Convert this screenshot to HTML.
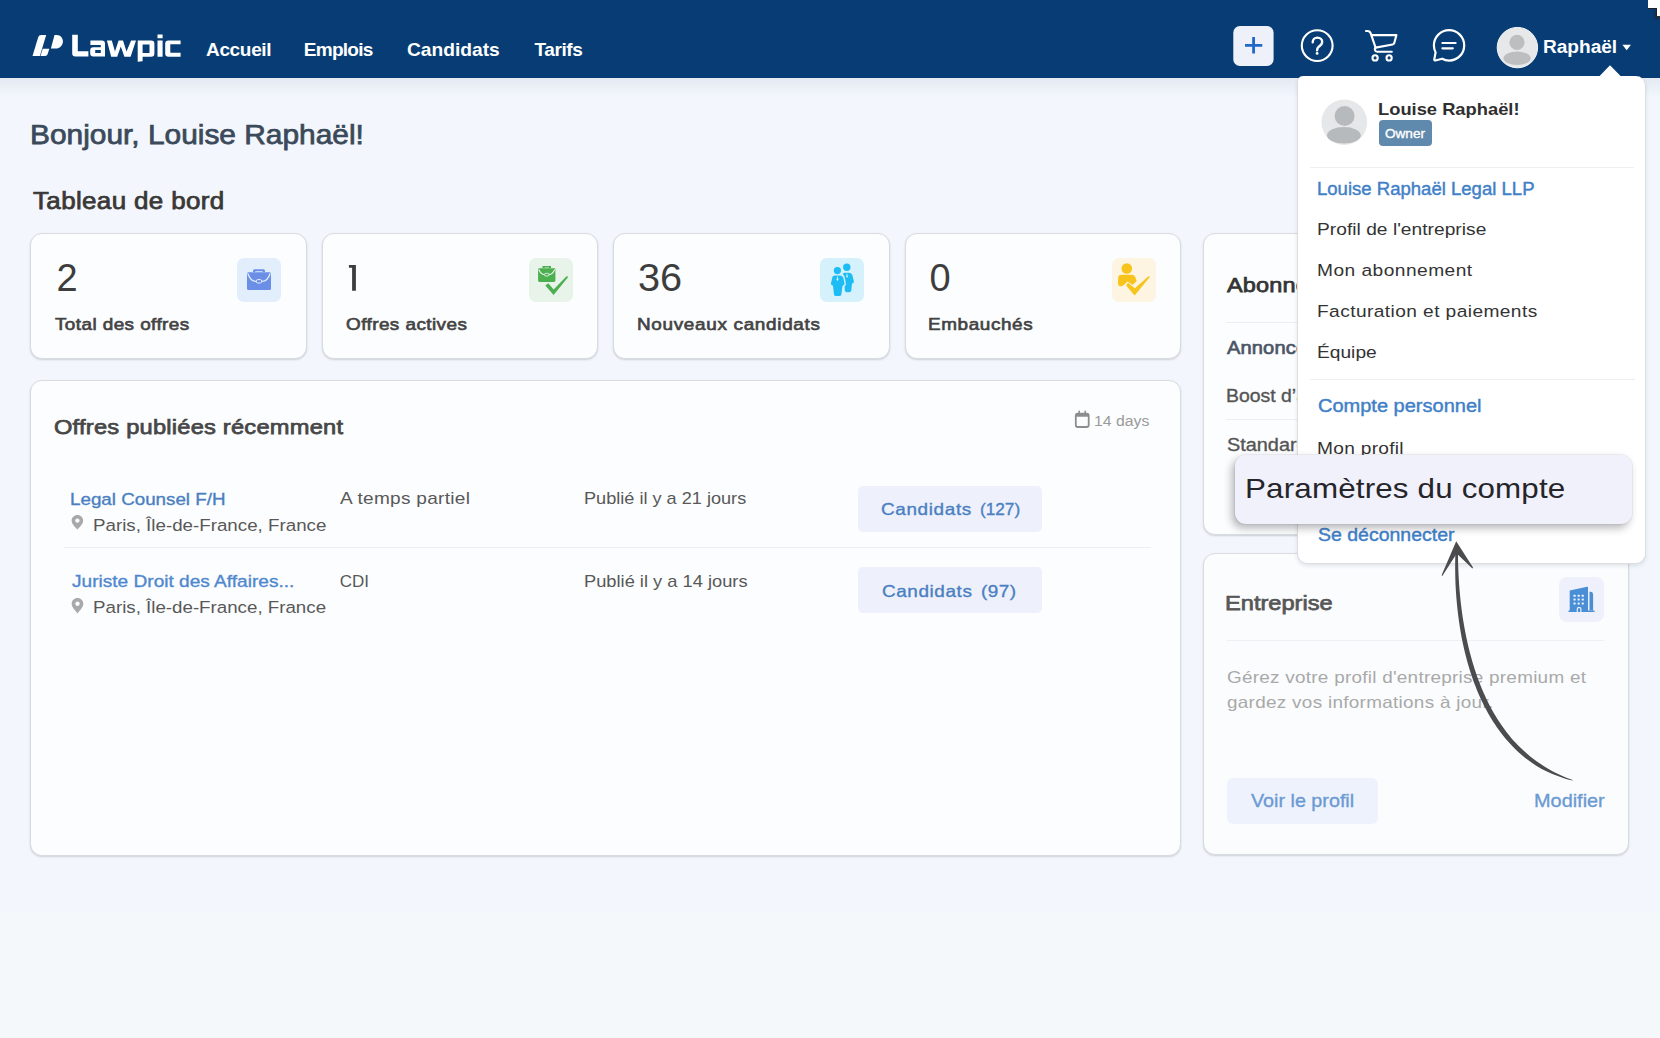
<!DOCTYPE html>
<html lang="fr">
<head>
<meta charset="utf-8">
<title>Lawpic - Tableau de bord</title>
<style>
*{margin:0;padding:0;box-sizing:border-box;}
html,body{width:1660px;height:1038px;overflow:hidden;}
body{position:relative;background:#f3f7fd;font-family:"Liberation Sans",sans-serif;}
.abs{position:absolute;}
.t{position:absolute;line-height:0;white-space:nowrap;font-family:"Liberation Sans",sans-serif;}
.card{position:absolute;background:#fcfdfe;border:1px solid #d8dbe0;border-radius:12px;box-shadow:0 1px 2px rgba(50,55,70,0.2);}
.hr{position:absolute;height:1px;background:#eceef1;}
.ibox{position:absolute;width:44px;height:44px;border-radius:7px;}
svg{position:absolute;left:0;top:0;overflow:visible;}
</style>
</head>
<body>
<!-- page background gradient near bottom -->
<div class="abs" style="left:0;top:78px;width:1660px;height:20px;background:linear-gradient(rgba(40,60,100,0.07),rgba(40,60,100,0));"></div>

<div class="abs" style="left:0;top:912px;width:1660px;height:126px;background:#f4f8fb;"></div>
<!-- NAVBAR -->
<div class="abs" style="left:0;top:0;width:1660px;height:78px;background:#073d74;"></div>
<svg width="1660" height="80" viewBox="0 0 1660 80">
  <g fill="#ffffff">
    <path d="M32.5,56.1 L38.2,37.3 Q38.9,35 41.3,35 L46.2,35 L39.9,56.1 Z"/>
    <path d="M42.7,48.8 L49.3,48.8 L47.6,54.3 Q47.1,56.1 45,56.1 L40.5,56.1 Z"/>
    <path d="M54.5,35 L56.8,35 C60.4,35 62.9,37.9 62.9,41.5 C62.9,45.6 59.6,48.6 55.6,48.6 L50.9,48.6 Z"/>
    <path d="M72.2,34.8 L77.8,34.8 L77.8,51.2 L88.4,51.2 L88.4,56.5 L75.4,56.5 Q72.2,56.5 72.2,53.3 Z"/>
    <path fill-rule="evenodd" d="M90.4,40.6 L101.8,40.6 Q105,40.6 105,43.8 L105,56.5 L93.4,56.5 Q90.2,56.5 90.2,53.3 L90.2,50.4 Q90.2,47.2 93.4,47.2 L100.8,47.2 L100.8,45.1 L90.4,45.1 Z M95.2,49.9 L100.8,49.9 L100.8,52.9 L95.2,52.9 Z"/>
    <path d="M106.9,40.4 L111.8,40.4 L115,51.6 L118.6,40.4 L123,40.4 L126.5,51.6 L131.1,40.4 L136,40.4 L130.6,56.7 L124.4,56.7 L120.8,46.6 L117.2,56.7 L111.2,56.7 Z"/>
    <path fill-rule="evenodd" d="M137.7,40.4 L151.1,40.4 Q154.4,40.4 154.4,43.7 L154.4,53.4 Q154.4,56.7 151.1,56.7 L142.6,56.7 L142.6,61.2 L137.7,61.8 Z M142.6,44.5 L149.5,44.5 L149.5,52.9 L142.6,52.9 Z"/>
    <path d="M157.5,34.6 L162.6,34.6 L162.6,38.3 L157.5,38.3 Z M157.5,40.4 L162.6,40.4 L162.6,56.7 L157.5,56.7 Z"/>
    <path d="M168.5,40.4 L180.6,40.4 L180.6,44.3 L170.3,44.3 L170.3,52.8 L180.6,52.8 L180.6,56.7 L168.5,56.7 Q165.2,56.7 165.2,53.4 L165.2,43.7 Q165.2,40.4 168.5,40.4 Z"/>
  </g>
  <!-- plus button -->
  <rect x="1233.3" y="26" width="40.3" height="40" rx="6.5" fill="#eef0fa"/>
  <path d="M1245,45.3 L1262.3,45.3 M1253.6,37 L1253.6,53.5" stroke="#2169c6" stroke-width="2.8" fill="none"/>
  <!-- help -->
  <circle cx="1317.2" cy="45.6" r="15.4" stroke="#fff" stroke-width="2.1" fill="none"/>
  <path d="M1312.7,42.2 C1312.7,39.4 1314.8,37.6 1317.4,37.6 C1320.2,37.6 1322.2,39.6 1322.2,42 C1322.2,44.6 1320.2,45.6 1318.7,46.8 C1317.5,47.8 1317.1,48.6 1317.1,50.2" stroke="#fff" stroke-width="2.4" fill="none" stroke-linecap="round"/>
  <circle cx="1317.1" cy="53.4" r="1.4" fill="#fff"/>
  <!-- cart -->
  <g stroke="#fff" stroke-width="2.1" fill="none" stroke-linecap="round" stroke-linejoin="round">
    <path d="M1366,31 L1367.6,31 C1369.2,31 1370.2,31.9 1370.7,33.4 L1375.6,47.6"/>
    <path d="M1371.8,35.1 L1396.4,35.1 L1394.2,43.2 C1393.9,44 1393.4,44.4 1392.6,44.5 L1375.6,47.6"/>
    <path d="M1375.6,47.6 C1374.2,48.7 1374.6,51.7 1377.2,51.7 L1391.8,51.7"/>
    <circle cx="1375.1" cy="57.9" r="2.6"/>
    <circle cx="1389.1" cy="57.9" r="2.6"/>
  </g>
  <!-- chat -->
  <g stroke="#fff" stroke-width="2.2" fill="none" stroke-linecap="round" stroke-linejoin="round">
    <path d="M1442.2,58.7 C1444.3,60 1446.6,60.6 1449.1,60.6 C1457.4,60.6 1464.2,53.8 1464.2,45.4 C1464.2,37 1457.4,30.2 1449.1,30.2 C1440.7,30.2 1433.9,37 1433.9,45.4 C1433.9,47.9 1434.5,50.3 1435.6,52.4 L1434.3,59.4 C1434.2,60.1 1434.7,60.6 1435.4,60.5 Z"/>
    <path d="M1442.4,43 L1455.6,43 M1442.4,48.3 L1452.8,48.3"/>
  </g>
  <!-- avatar -->
  <defs><clipPath id="avc"><circle cx="1517.2" cy="47.8" r="20"/></clipPath>
  <clipPath id="avc2"><circle cx="1344.3" cy="122.2" r="22.6"/></clipPath></defs>
  <circle cx="1517.4" cy="47.6" r="20.2" fill="#e7e8ea" stroke="#f6f7f8" stroke-width="1"/>
  <g fill="#bdbec0">
    <circle cx="1517" cy="42.4" r="7.6"/>
    <ellipse cx="1517.1" cy="58.2" rx="13.6" ry="6.7"/>
  </g>
  <path d="M1542,50" />
  <path d="M1622.4,44.7 L1631,44.7 L1626.7,50.3 Z" fill="#fff"/>
</svg>
<div class="t" id="t0" style="left:206.00px;top:49.91px;font-size:19.05px;font-weight:700;color:#ffffff;letter-spacing:-0.352px;">Accueil</div>
<div class="t" id="t1" style="left:303.80px;top:49.91px;font-size:19.05px;font-weight:700;color:#ffffff;letter-spacing:-0.740px;">Emplois</div>
<div class="t" id="t2" style="left:407.30px;top:49.91px;font-size:19.05px;font-weight:700;color:#ffffff;letter-spacing:0.000px;transform:scaleX(1.0086);transform-origin:0 0;">Candidats</div>
<div class="t" id="t3" style="left:534.50px;top:49.91px;font-size:19.05px;font-weight:700;color:#ffffff;letter-spacing:-0.425px;">Tarifs</div>
<div class="t" id="t4" style="left:1543.42px;top:47.01px;font-size:17.72px;font-weight:700;color:#ffffff;letter-spacing:0.000px;transform:scaleX(1.0769);transform-origin:0 0;">Raphaël</div>

<!-- MAIN -->
<div class="card" style="left:30px;top:232.5px;width:276.5px;height:126px;"></div>
<div class="card" style="left:321.5px;top:232.5px;width:276.5px;height:126px;"></div>
<div class="card" style="left:613px;top:232.5px;width:276.5px;height:126px;"></div>
<div class="card" style="left:904.5px;top:232.5px;width:276.5px;height:126px;"></div>
<div class="ibox" style="left:237px;top:258px;background:#e2eefc;"></div>
<div class="ibox" style="left:528.7px;top:258px;background:#e8f4ea;"></div>
<div class="ibox" style="left:820px;top:258px;background:#d5f1fc;"></div>
<div class="ibox" style="left:1112px;top:258px;background:#fef4e2;"></div>
<svg width="1660" height="1038" viewBox="0 0 1660 1038">
  <path d="M348.9,265.1 L355.9,265.1 L355.9,290.8 L352.1,290.8 L352.1,267.7 L348.9,267.7 Z" fill="#3d3d3d"/>
  <!-- briefcase blue -->
  <g fill="#6b8ee6">
    <path d="M254.5,269.3 L263.5,269.3 Q265,269.3 265,270.8 L265,272 L262.6,272 L262.6,271.3 L255.4,271.3 L255.4,272 L253,272 L253,270.8 Q253,269.3 254.5,269.3 Z"/>
    <path d="M248.5,272.3 L269.5,272.3 Q271,272.3 271,273.8 L271,288.5 Q271,290 269.5,290 L248.5,290 Q247,290 247,288.5 L247,273.8 Q247,272.3 248.5,272.3 Z"/>
  </g>
  <path d="M247.8,273.5 Q250.5,281.5 256,281.3 L262,281.3 Q267.5,281.5 270.2,273.5" stroke="#e2eefc" stroke-width="1.3" fill="none"/>
  <rect x="256.3" y="279.6" width="5.4" height="3.4" rx="1.4" fill="#6b8ee6" stroke="#e2eefc" stroke-width="1"/>
  <!-- briefcase green + check -->
  <g fill="#4caf50">
    <path d="M542.5,265.9 L551,265.9 L551,268 L548.8,268 L548.8,267.4 L544.7,267.4 L544.7,268 L542.5,268 Z"/>
    <path d="M539.5,268.3 L554,268.3 Q555.4,268.3 555.4,269.7 L555.4,280.5 Q555.4,281.9 554,281.9 L539.5,281.9 Q538.1,281.9 538.1,280.5 L538.1,269.7 Q538.1,268.3 539.5,268.3 Z"/>
    <path d="M545.3,285.5 L548.3,283.3 L553.6,289.4 L566.3,276.6 Q567.9,275.9 568,277.2 L553.6,295 Z"/>
  </g>
  <path d="M538.8,269.5 Q540.8,274.6 544.5,274.6 L549,274.6 Q552.7,274.6 554.7,269.5" stroke="#e8f4ea" stroke-width="1.1" fill="none"/>
  <rect x="544.6" y="273.3" width="4.3" height="2.7" rx="1.2" fill="#4caf50" stroke="#e8f4ea" stroke-width="0.9"/>
  <!-- people cyan -->
  <g fill="#1ebcf4">
    <circle cx="837.4" cy="270.6" r="3.6"/>
    <circle cx="846.8" cy="267.2" r="3.7"/>
    <path d="M832.6,276.6 Q833.5,275.6 835,275.5 L840,275.5 Q842,275.6 843.3,277.5 L844.5,283.5 Q844.5,285.5 842.5,285.8 L841.4,294.5 Q841,296.1 839.2,296.1 L836,296.1 Q834.2,296.1 834,294.5 L833,285.8 Q830.9,285.5 830.9,283.5 Z"/>
    <path d="M842.7,273.8 Q843.6,272.8 845,272.7 L849,272.7 Q851.1,272.8 852.2,274.8 L853.9,281.2 Q854,283.4 852,283.5 L851.3,290.6 Q851,292.2 849.3,292.2 L846.7,292.2 Q845.1,292.2 844.8,290.6 L844.6,286.5 Q846.4,285 845.8,282.8 L844.5,276.6 Z"/>
  </g>
  <path d="M837.5,275.6 L838.4,279.5 L837.5,281.2 L836.6,279.5 Z" fill="#d5f1fc"/>
  <path d="M847,272.8 L847.8,276.4 L847,278 L846.2,276.4 Z" fill="#d5f1fc"/>
  <!-- person check yellow -->
  <g fill="#f6c41c">
    <circle cx="1126.8" cy="268.5" r="5.3"/>
    <path d="M1119,275.6 Q1120,274.8 1122,274.8 L1131.5,274.8 Q1134.6,274.8 1135.4,277.5 L1136.7,281 L1132.5,285 L1127.6,281.5 L1123.6,285.3 Q1121.5,286.7 1119.7,286.2 Q1117.9,285.4 1118,283 L1118.2,278.4 Q1118.3,276.4 1119,275.6 Z"/>
    <path d="M1126.2,285.6 L1128,282.8 L1134.8,288.2 L1148.2,276.5 Q1149.7,275.8 1149.8,277 L1134.6,295.6 Z"/>
  </g>
</svg>

<div class="card" style="left:30px;top:379.5px;width:1151px;height:476px;"></div>
<div class="hr" style="left:63.5px;top:547px;width:1087.5px;"></div>
<div class="abs" style="left:857.7px;top:486.2px;width:184.3px;height:46.2px;background:#eef1fb;border-radius:5px;"></div>
<div class="abs" style="left:857.7px;top:567.1px;width:184.3px;height:45.5px;background:#eef1fb;border-radius:5px;"></div>
<svg width="1660" height="1038" viewBox="0 0 1660 1038">
  <!-- calendar -->
  <g stroke="#8d8d8d" fill="none" stroke-width="1.8" stroke-linejoin="round">
    <rect x="1075.8" y="413.6" width="12.9" height="13.4" rx="2"/>
    <rect x="1075.8" y="413.2" width="12.9" height="3.6" rx="1.2" fill="#8d8d8d" stroke="none"/>
    <path d="M1079.2,411.2 L1079.2,414 M1085.2,411.2 L1085.2,414" stroke-linecap="round" stroke-width="1.6"/>
  </g>
  <!-- pins -->
  <g fill="#a9a9a9">
    <path d="M77.4,514.9 C74.1,514.9 71.6,517.4 71.6,520.6 C71.6,524 75,527.1 77.4,529.4 C79.8,527.1 83.2,524 83.2,520.6 C83.2,517.4 80.7,514.9 77.4,514.9 Z M77.4,518.4 C78.6,518.4 79.6,519.4 79.6,520.6 C79.6,521.8 78.6,522.8 77.4,522.8 C76.2,522.8 75.2,521.8 75.2,520.6 C75.2,519.4 76.2,518.4 77.4,518.4 Z" fill-rule="evenodd"/>
    <path d="M77.5,598 C74.2,598 71.7,600.5 71.7,603.7 C71.7,607.1 75.1,610.2 77.5,613.5 C79.9,610.2 83.3,607.1 83.3,603.7 C83.3,600.5 80.8,598 77.5,598 Z M77.5,601.5 C78.7,601.5 79.7,602.5 79.7,603.7 C79.7,604.9 78.7,605.9 77.5,605.9 C76.3,605.9 75.3,604.9 75.3,603.7 C75.3,602.5 76.3,601.5 77.5,601.5 Z" fill-rule="evenodd"/>
  </g>
</svg>
<div class="t" id="t5" style="left:30.21px;top:135.01px;font-size:27.30px;font-weight:400;-webkit-text-stroke:0.75px currentColor;color:#3b4a5a;letter-spacing:0.000px;transform:scaleX(1.0944);transform-origin:0 0;">Bonjour, Louise Raphaël!</div>
<div class="t" id="t6" style="left:33.00px;top:201.41px;font-size:23.18px;font-weight:400;-webkit-text-stroke:0.75px currentColor;color:#3a3836;letter-spacing:0.322px;transform:scaleX(1.1200);transform-origin:0 0;">Tableau de bord</div>
<div class="t" id="t7" style="left:56.50px;top:278.01px;font-size:38.00px;font-weight:400;color:#3d3d3d;letter-spacing:-0.600px;">2</div>
<div class="t" id="t8" style="left:638.46px;top:278.00px;font-size:38.00px;font-weight:400;color:#3d3d3d;letter-spacing:0.000px;transform:scaleX(1.0440);transform-origin:0 0;">36</div>
<div class="t" id="t9" style="left:929.40px;top:278.00px;font-size:38.00px;font-weight:400;color:#3d3d3d;letter-spacing:-0.100px;">0</div>
<div class="t" id="t10" style="left:55.10px;top:324.50px;font-size:16.89px;font-weight:400;-webkit-text-stroke:0.65px currentColor;color:#434343;letter-spacing:0.379px;transform:scaleX(1.1200);transform-origin:0 0;">Total des offres</div>
<div class="t" id="t11" style="left:346.30px;top:324.50px;font-size:16.89px;font-weight:400;-webkit-text-stroke:0.65px currentColor;color:#434343;letter-spacing:0.391px;transform:scaleX(1.1200);transform-origin:0 0;">Offres actives</div>
<div class="t" id="t12" style="left:637.18px;top:324.50px;font-size:16.89px;font-weight:400;-webkit-text-stroke:0.65px currentColor;color:#434343;letter-spacing:0.612px;transform:scaleX(1.1200);transform-origin:0 0;">Nouveaux candidats</div>
<div class="t" id="t13" style="left:928.38px;top:324.50px;font-size:16.89px;font-weight:400;-webkit-text-stroke:0.65px currentColor;color:#434343;letter-spacing:0.536px;transform:scaleX(1.1200);transform-origin:0 0;">Embauchés</div>
<div class="t" id="t14" style="left:53.98px;top:427.00px;font-size:21.12px;font-weight:400;-webkit-text-stroke:0.75px currentColor;color:#474747;letter-spacing:0.207px;transform:scaleX(1.1200);transform-origin:0 0;">Offres publiées récemment</div>
<div class="t" id="t15" style="left:1094.34px;top:420.81px;font-size:14.83px;font-weight:400;color:#9a9a9a;letter-spacing:0.000px;transform:scaleX(1.0649);transform-origin:0 0;">14 days</div>
<div class="t" id="t16" style="left:69.90px;top:499.91px;font-size:17.10px;font-weight:400;-webkit-text-stroke:0.35px currentColor;color:#4a7fc2;letter-spacing:0.000px;transform:scaleX(1.0982);transform-origin:0 0;">Legal Counsel F/H</div>
<div class="t" id="t17" style="left:92.60px;top:525.51px;font-size:17.10px;font-weight:400;color:#585858;letter-spacing:0.000px;transform:scaleX(1.0966);transform-origin:0 0;">Paris, Île-de-France, France</div>
<div class="t" id="t18" style="left:339.80px;top:499.21px;font-size:17.00px;font-weight:400;color:#585858;letter-spacing:0.254px;transform:scaleX(1.1200);transform-origin:0 0;">A temps partiel</div>
<div class="t" id="t19" style="left:584.13px;top:499.21px;font-size:17.00px;font-weight:400;color:#585858;letter-spacing:-0.000px;transform:scaleX(1.0661);transform-origin:0 0;">Publié il y a 21 jours</div>
<div class="t" id="t20" style="left:880.90px;top:510.00px;font-size:16.89px;font-weight:400;-webkit-text-stroke:0.35px currentColor;color:#4a7fc2;letter-spacing:0.579px;transform:scaleX(1.1200);transform-origin:0 0;">Candidats</div>
<div class="t" id="t21" style="left:980.08px;top:510.00px;font-size:16.89px;font-weight:400;-webkit-text-stroke:0.35px currentColor;color:#4a7fc2;letter-spacing:0.000px;transform:scaleX(1.0192);transform-origin:0 0;">(127)</div>
<div class="t" id="t22" style="left:71.80px;top:582.00px;font-size:17.10px;font-weight:400;-webkit-text-stroke:0.35px currentColor;color:#4f88ce;letter-spacing:0.000px;transform:scaleX(1.1164);transform-origin:0 0;">Juriste Droit des Affaires...</div>
<div class="t" id="t23" style="left:92.60px;top:607.61px;font-size:17.10px;font-weight:400;color:#585858;letter-spacing:-0.000px;transform:scaleX(1.0952);transform-origin:0 0;">Paris, Île-de-France, France</div>
<div class="t" id="t24" style="left:339.80px;top:582.10px;font-size:17.00px;font-weight:400;color:#585858;letter-spacing:-0.027px;">CDI</div>
<div class="t" id="t25" style="left:584.13px;top:581.60px;font-size:17.00px;font-weight:400;color:#585858;letter-spacing:0.000px;transform:scaleX(1.0748);transform-origin:0 0;">Publié il y a 14 jours</div>
<div class="t" id="t26" style="left:881.60px;top:591.71px;font-size:16.89px;font-weight:400;-webkit-text-stroke:0.35px currentColor;color:#4a7fc2;letter-spacing:0.534px;transform:scaleX(1.1200);transform-origin:0 0;">Candidats</div>
<div class="t" id="t27" style="left:981.48px;top:591.72px;font-size:16.89px;font-weight:400;-webkit-text-stroke:0.35px currentColor;color:#4a7fc2;letter-spacing:0.418px;transform:scaleX(1.1200);transform-origin:0 0;">(97)</div>

<!-- ABONNEMENT CARD -->
<div class="card" style="left:1202.5px;top:232.5px;width:426px;height:302px;"></div>
<div class="hr" style="left:1226px;top:321.5px;width:378px;"></div>
<div class="hr" style="left:1226px;top:419px;width:378px;"></div>
<div class="t" id="t28" style="left:1226.80px;top:284.50px;font-size:21.01px;font-weight:400;-webkit-text-stroke:0.75px currentColor;color:#343434;letter-spacing:0.123px;transform:scaleX(1.1200);transform-origin:0 0;">Abonnement</div>
<div class="t" id="t29" style="left:1226.90px;top:347.51px;font-size:17.92px;font-weight:400;-webkit-text-stroke:0.65px currentColor;color:#4a5566;letter-spacing:0.130px;transform:scaleX(1.1200);transform-origin:0 0;">Annonce</div>
<div class="t" id="t30" style="left:1225.92px;top:396.00px;font-size:17.92px;font-weight:400;-webkit-text-stroke:0.35px currentColor;color:#555555;letter-spacing:0.000px;transform:scaleX(1.0841);transform-origin:0 0;">Boost d’annonce</div>
<div class="t" id="t31" style="left:1227.00px;top:444.60px;font-size:17.92px;font-weight:400;-webkit-text-stroke:0.35px currentColor;color:#555555;letter-spacing:-0.000px;transform:scaleX(1.1093);transform-origin:0 0;">Standard</div>

<!-- ENTREPRISE CARD -->
<div class="card" style="left:1202.5px;top:552.5px;width:426px;height:302.5px;background:#fbfcfe;"></div>
<div class="hr" style="left:1226.5px;top:639.7px;width:377.5px;background:#eef0f3;"></div>
<div class="abs" style="left:1559.4px;top:577px;width:44.5px;height:45px;background:#eef1fb;border-radius:8px;"></div>
<svg width="1660" height="1038" viewBox="0 0 1660 1038">
  <g fill="#4a8ed6">
    <path d="M1569.7,590.4 L1587.2,586.8 Q1588,586.7 1588,587.5 L1588,610.6 L1594.5,610.6 L1594.5,612 L1568.5,612 L1568.5,610.6 L1569.7,610.6 Z"/>
    <path d="M1589.5,591.8 L1591,591.8 Q1593.1,592.2 1593.1,594.4 L1593.1,610.6 L1589.5,610.6 Z"/>
  </g>
  <g fill="#eef4fc">
    <rect x="1573.5" y="594.7" width="2.1" height="2.1" rx="0.5"/><rect x="1577.6" y="594.7" width="2.1" height="2.1" rx="0.5"/><rect x="1581.7" y="594.7" width="2.1" height="2.1" rx="0.5"/>
    <rect x="1573.5" y="598.5" width="2.1" height="2.1" rx="0.5"/><rect x="1577.6" y="598.5" width="2.1" height="2.1" rx="0.5"/><rect x="1581.7" y="598.5" width="2.1" height="2.1" rx="0.5"/>
    <rect x="1573.5" y="602.4" width="2.1" height="2.1" rx="0.5"/><rect x="1577.6" y="602.4" width="2.1" height="2.1" rx="0.5"/><rect x="1581.7" y="602.4" width="2.1" height="2.1" rx="0.5"/>
  </g>
  <path d="M1577.3,612 L1577.3,608.7 Q1577.3,607.6 1578.4,607.6 L1579.8,607.6 Q1580.9,607.6 1580.9,608.7 L1580.9,612" stroke="#eef4fc" stroke-width="1.1" fill="#4a8ed6"/>
</svg>
<div class="abs" style="left:1226.6px;top:777.5px;width:151.2px;height:46px;background:#eef2fc;border-radius:6px;"></div>
<div class="t" id="t32" style="left:1225.48px;top:602.90px;font-size:21.12px;font-weight:400;-webkit-text-stroke:0.75px currentColor;color:#575757;letter-spacing:0.000px;transform:scaleX(1.1189);transform-origin:0 0;">Entreprise</div>
<div class="t" id="t33" style="left:1226.60px;top:678.00px;font-size:16.89px;font-weight:400;color:#a9a9a9;letter-spacing:0.235px;transform:scaleX(1.1200);transform-origin:0 0;">Gérez votre profil d'entreprise premium et</div>
<div class="t" id="t34" style="left:1226.60px;top:703.01px;font-size:16.89px;font-weight:400;color:#a9a9a9;letter-spacing:0.262px;transform:scaleX(1.1200);transform-origin:0 0;">gardez vos informations à jour.</div>
<div class="t" id="t35" style="left:1251.30px;top:801.00px;font-size:18.85px;font-weight:400;-webkit-text-stroke:0.35px currentColor;color:#6b9ad3;letter-spacing:0.000px;transform:scaleX(1.0477);transform-origin:0 0;">Voir le profil</div>
<div class="t" id="t36" style="left:1533.94px;top:801.00px;font-size:18.85px;font-weight:400;-webkit-text-stroke:0.35px currentColor;color:#6b9ad3;letter-spacing:0.000px;transform:scaleX(1.0556);transform-origin:0 0;">Modifier</div>

<!-- DROPDOWN -->
<div class="abs" style="left:1297px;top:76px;width:348.5px;height:487.5px;background:#ffffff;border:1px solid #dcdee2;border-top:none;border-radius:6px 10px 10px 10px;box-shadow:0 2px 4px rgba(40,50,70,0.12);"></div>
<svg width="1660" height="1038" viewBox="0 0 1660 1038">
  <path d="M1598.4,77.2 L1610,65.2 L1621.8,77.2 Z" fill="#ffffff"/>
  <circle cx="1344.3" cy="122.2" r="22.8" fill="#e5e7e9"/>
  <g fill="#b7babd">
    <circle cx="1344.6" cy="116" r="10"/>
    <ellipse cx="1343.9" cy="135.3" rx="16.9" ry="8.3"/>
  </g>
</svg>
<div class="abs" style="left:1379.2px;top:120.4px;width:52.7px;height:25.2px;background:#5f89ad;border-radius:4px;"></div>
<div class="hr" style="left:1310px;top:166.5px;width:323.5px;background:#eeeeee;"></div>
<div class="hr" style="left:1309.5px;top:378.5px;width:325px;background:#eeeeee;"></div>
<div class="t" id="t37" style="left:1377.63px;top:109.81px;font-size:17.10px;font-weight:700;color:#2f2f2f;letter-spacing:0.000px;transform:scaleX(1.0719);transform-origin:0 0;">Louise Raphaël!</div>
<div class="t" id="t38" style="left:1384.70px;top:133.61px;font-size:12.98px;font-weight:400;-webkit-text-stroke:0.35px currentColor;color:#ffffff;letter-spacing:0.000px;transform:scaleX(1.0469);transform-origin:0 0;">Owner</div>
<div class="t" id="t39" style="left:1317.46px;top:189.31px;font-size:17.92px;font-weight:400;-webkit-text-stroke:0.42px currentColor;color:#3f80c8;letter-spacing:0.000px;transform:scaleX(1.0354);transform-origin:0 0;">Louise Raphaël Legal LLP</div>
<div class="t" id="t40" style="left:1316.88px;top:230.01px;font-size:17.10px;font-weight:400;color:#333333;letter-spacing:0.029px;transform:scaleX(1.1200);transform-origin:0 0;">Profil de l'entreprise</div>
<div class="t" id="t41" style="left:1316.88px;top:270.80px;font-size:17.10px;font-weight:400;color:#333333;letter-spacing:0.421px;transform:scaleX(1.1200);transform-origin:0 0;">Mon abonnement</div>
<div class="t" id="t42" style="left:1316.88px;top:312.31px;font-size:17.10px;font-weight:400;color:#333333;letter-spacing:0.370px;transform:scaleX(1.1200);transform-origin:0 0;">Facturation et paiements</div>
<div class="t" id="t43" style="left:1316.88px;top:353.00px;font-size:17.10px;font-weight:400;color:#333333;letter-spacing:0.013px;transform:scaleX(1.1200);transform-origin:0 0;">Équipe</div>
<div class="t" id="t44" style="left:1318.00px;top:406.01px;font-size:17.92px;font-weight:400;-webkit-text-stroke:0.42px currentColor;color:#3f80c8;letter-spacing:0.000px;transform:scaleX(1.1174);transform-origin:0 0;">Compte personnel</div>
<div class="t" id="t45" style="left:1316.88px;top:449.20px;font-size:17.10px;font-weight:400;color:#333333;letter-spacing:0.253px;transform:scaleX(1.1200);transform-origin:0 0;">Mon profil</div>
<div class="t" id="t46" style="left:1318.00px;top:535.00px;font-size:17.92px;font-weight:400;-webkit-text-stroke:0.42px currentColor;color:#3f80c8;letter-spacing:0.000px;transform:scaleX(1.0879);transform-origin:0 0;">Se déconnecter</div>

<!-- TOOLTIP -->
<div class="abs" style="left:1234.8px;top:454.5px;width:397.5px;height:69px;background:#f0f1fb;border-radius:11px;box-shadow:0 0 0 1px rgba(70,70,100,0.06),-3px 4px 9px rgba(30,30,40,0.33);"></div>
<div class="t" id="t47" style="left:1244.96px;top:489.21px;font-size:28.00px;font-weight:400;color:#25252a;letter-spacing:0.143px;transform:scaleX(1.1200);transform-origin:0 0;">Paramètres du compte</div>

<!-- ARROW -->
<svg width="1660" height="1038" viewBox="0 0 1660 1038">
  <path d="M1455.40,551.98 L1455.30,555.23 L1455.23,558.52 L1455.18,561.83 L1455.16,565.17 L1455.17,568.53 L1455.20,571.91 L1455.26,575.32 L1455.34,578.75 L1455.46,582.20 L1455.60,585.66 L1455.79,589.14 L1456.01,592.63 L1456.26,596.14 L1456.55,599.66 L1456.86,603.19 L1457.21,606.72 L1457.59,610.27 L1458.00,613.82 L1458.45,617.37 L1458.93,620.93 L1459.45,624.49 L1460.00,628.05 L1460.59,631.61 L1461.22,635.16 L1461.89,638.71 L1462.61,642.25 L1463.37,645.79 L1464.16,649.32 L1465.00,652.83 L1465.88,656.34 L1466.79,659.83 L1467.76,663.31 L1468.77,666.76 L1469.82,670.21 L1470.92,673.63 L1472.06,677.03 L1473.25,680.41 L1474.48,683.77 L1475.76,687.10 L1477.09,690.41 L1478.46,693.69 L1479.89,696.93 L1481.38,700.14 L1482.91,703.33 L1484.49,706.47 L1486.12,709.58 L1487.81,712.66 L1489.54,715.69 L1491.33,718.69 L1493.17,721.65 L1495.06,724.56 L1497.02,727.42 L1499.03,730.23 L1501.10,733.00 L1503.22,735.71 L1505.40,738.38 L1507.64,740.99 L1509.93,743.55 L1512.28,746.05 L1514.69,748.50 L1517.15,750.89 L1519.68,753.21 L1522.27,755.46 L1524.94,757.64 L1527.67,759.74 L1530.46,761.78 L1533.30,763.75 L1536.21,765.65 L1539.18,767.48 L1542.21,769.22 L1545.35,770.81 L1548.54,772.32 L1551.79,773.75 L1555.10,775.10 L1558.47,776.37 L1561.89,777.55 L1565.38,778.65 L1568.92,779.66 L1572.51,780.59 L1572.69,780.01 L1569.20,778.78 L1565.79,777.46 L1562.46,776.07 L1559.20,774.60 L1556.02,773.05 L1552.91,771.43 L1549.87,769.74 L1546.90,767.98 L1544.01,766.15 L1541.13,764.33 L1538.32,762.45 L1535.57,760.51 L1532.88,758.50 L1530.25,756.43 L1527.68,754.30 L1525.18,752.11 L1522.72,749.87 L1520.31,747.59 L1517.95,745.25 L1515.65,742.85 L1513.41,740.40 L1511.22,737.89 L1509.09,735.33 L1507.01,732.72 L1504.98,730.06 L1503.01,727.36 L1501.09,724.60 L1499.23,721.80 L1497.40,718.96 L1495.62,716.09 L1493.89,713.17 L1492.21,710.20 L1490.58,707.20 L1489.00,704.17 L1487.46,701.09 L1485.98,697.98 L1484.54,694.84 L1483.14,691.67 L1481.78,688.47 L1480.46,685.24 L1479.19,681.99 L1477.96,678.70 L1476.78,675.40 L1475.64,672.06 L1474.54,668.71 L1473.49,665.34 L1472.47,661.94 L1471.49,658.53 L1470.55,655.11 L1469.65,651.67 L1468.79,648.22 L1467.96,644.75 L1467.18,641.28 L1466.43,637.79 L1465.72,634.30 L1465.03,630.80 L1464.38,627.30 L1463.77,623.80 L1463.19,620.29 L1462.64,616.78 L1462.13,613.28 L1461.66,609.77 L1461.21,606.27 L1460.80,602.78 L1460.42,599.29 L1460.07,595.81 L1459.76,592.35 L1459.47,588.89 L1459.21,585.44 L1458.97,582.01 L1458.76,578.60 L1458.57,575.20 L1458.41,571.82 L1458.28,568.47 L1458.17,565.13 L1458.09,561.81 L1458.04,558.52 L1458.01,555.26 L1458.00,552.02 Z" fill="#4b4c4e"/>
  <path d="M1456.2,541.3 L1473,567.6 L1472.4,568.4 L1456.7,553.6 L1442.3,576 L1441.6,575.3 Z" fill="#4b4c4e"/>
</svg>

<!-- top-right corner artifact -->
<div class="abs" style="left:1648px;top:0;width:12px;height:8.5px;background:#fff;border-bottom:1px solid #222;"></div>
<div class="abs" style="left:1655.5px;top:8px;width:4.5px;height:8.5px;background:#fff;border-left:1px solid #222;border-bottom:1px solid #333;box-shadow:-1px 2px 3px rgba(40,30,20,0.6);"></div>
</body>
</html>
